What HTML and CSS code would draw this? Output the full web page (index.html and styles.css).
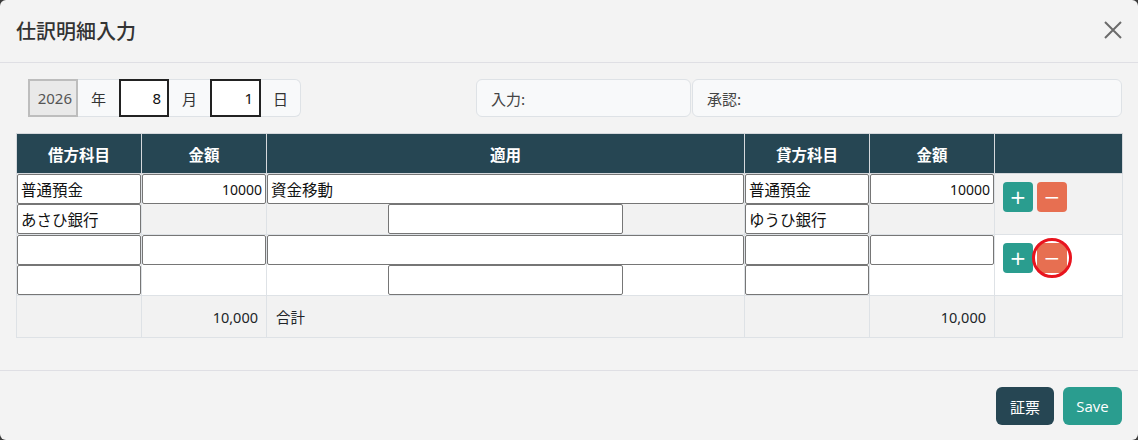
FILE: index.html
```html
<!DOCTYPE html>
<html lang="ja">
<head>
<meta charset="utf-8">
<link rel="stylesheet" href="styles.css">
</head>
<body>
<div class="modal">
  <div class="modal-header">
    <h1 class="title">仕訳明細入力</h1>
    <button class="close" aria-label="close">
      <svg width="18" height="18" viewBox="0 0 18 18"><path d="M1 1L17 17M17 1L1 17" stroke="#6b6b6b" stroke-width="2" fill="none"/></svg>
    </button>
  </div>
  <div class="modal-body">
    <div class="top-row">
      <div class="date-group">
        <input class="d-input year" value="2026" disabled>
        <span class="addon">年</span>
        <input class="d-input focus" value="8">
        <span class="addon">月</span>
        <input class="d-input focus day" value="1">
        <span class="addon last">日</span>
      </div>
      <div class="info info-in">入力:</div>
      <div class="info info-ok">承認:</div>
    </div>
    <table class="grid">
      <colgroup>
        <col class="c1"><col class="c2"><col class="c3"><col class="c4"><col class="c5"><col class="c6">
      </colgroup>
      <thead>
        <tr><th>借方科目</th><th>金額</th><th>適用</th><th>貸方科目</th><th>金額</th><th></th></tr>
      </thead>
      <tbody>
        <tr class="alt">
          <td><input class="f" value="普通預金"><input class="f" value="あさひ銀行"></td>
          <td><input class="f num" value="10000"></td>
          <td><input class="f" value="資金移動"><input class="f mid" value=""></td>
          <td><input class="f" value="普通預金"><input class="f" value="ゆうひ銀行"></td>
          <td><input class="f num" value="10000"></td>
          <td class="act"><div class="btns"><button class="b plus">+</button><button class="b minus">−</button></div></td>
        </tr>
        <tr>
          <td><input class="f" value=""><input class="f" value=""></td>
          <td><input class="f num" value=""></td>
          <td><input class="f" value=""><input class="f mid" value=""></td>
          <td><input class="f" value=""><input class="f" value=""></td>
          <td><input class="f num" value=""></td>
          <td class="act"><div class="btns"><button class="b plus">+</button><span class="wrap"><button class="b minus">−</button><span class="ring"></span></span></div></td>
        </tr>
        <tr class="alt total">
          <td></td>
          <td class="r">10,000</td>
          <td>合計</td>
          <td></td>
          <td class="r">10,000</td>
          <td></td>
        </tr>
      </tbody>
    </table>
  </div>
  <div class="modal-footer">
    <button class="fbtn dark">証票</button>
    <button class="fbtn green">Save</button>
  </div>
</div>
</body>
</html>
```
FILE: styles.css
```css
* { box-sizing: border-box; }
html, body { margin: 0; padding: 0; }
body {
  background: #3a3a3a;
  font-family: "Noto Sans", "Noto Sans CJK JP", sans-serif;
  font-size: 14px;
  color: #212529;
}
.modal {
  width: 1138px;
  height: 440px;
  background: #f3f3f3;
  border-radius: 6px;
  overflow: hidden;
}
.modal-header {
  height: 63px;
  border-bottom: 1px solid #dfdfe4;
  display: flex;
  align-items: center;
  justify-content: space-between;
  padding: 0 16px;
}
.title {
  margin: 0;
  font-family: "Noto Sans CJK JP", sans-serif;
  font-size: 20px;
  font-weight: 500;
  color: #333;
  padding-bottom: 2px;
}
.close {
  border: 0;
  background: transparent;
  padding: 0;
  width: 18px;
  height: 18px;
  margin-bottom: 2px;
}
.close svg { display: block; }
.modal-body {
  padding: 16px 16px 32px 16px;
}
.top-row {
  display: flex;
  height: 38px;
  margin-bottom: 17px;
}
.date-group {
  display: flex;
  margin-left: 12px;
  width: 448px;
}
.d-input {
  flex: none;
  width: 50px;
  height: 38px;
  border: 2px solid #222;
  background: #fff;
  text-align: right;
  padding: 0 6px;
  font-family: "Noto Sans", sans-serif;
  font-size: 15px;
  color: #111;
}
.d-input.day { width: 51px; }
.d-input.year {
  background: #e9e9e9;
  border: 2px solid #bdbdbd;
  color: #555;
  padding-right: 4px;
}
.addon {
  flex: none;
  width: 41px;
  height: 38px;
  display: flex;
  align-items: center;
  justify-content: center;
  background: #f8f9fa;
  border-top: 1px solid #dee2e6;
  border-bottom: 1px solid #dee2e6;
  font-family: "Noto Sans CJK JP", sans-serif;
  font-size: 15px;
  color: #333;
}
.addon.last {
  width: 40px;
  border-right: 1px solid #dee2e6;
  border-radius: 0 6px 6px 0;
}
.info {
  height: 38px;
  background: #f8f9fa;
  border: 1px solid #dee2e6;
  border-radius: 6px;
  display: flex;
  align-items: center;
  padding-left: 14px;
  font-family: "Noto Sans CJK JP", sans-serif;
  font-size: 15px;
  color: #444;
}
.info-in { width: 215px; }
.info-ok { width: 430px; margin-left: 1px; }

.grid {
  width: 1106px;
  border-collapse: collapse;
  table-layout: fixed;
  margin-top: -1px;
}
.c1, .c2, .c4, .c5 { width: 125px; }
.c3 { width: 478px; }
.c6 { width: 128px; }
.grid th {
  background: #264653;
  color: #fff;
  font-family: "Noto Sans CJK JP", sans-serif;
  font-weight: 700;
  font-size: 15.5px;
  height: 40px;
  border: 1px solid #d5d8dc;
  padding: 0;
}
.grid td {
  border: 1px solid #dee2e6;
  padding: 0;
  vertical-align: top;
  background: #fff;
}
.grid tr.alt td { background: #f2f2f2; }
.f {
  display: block;
  width: 100%;
  height: 30px;
  margin: 0;
  border: 1px solid #767676;
  border-radius: 2px;
  background: #fff;
  padding: 0 3px;
  font-family: "Noto Sans CJK JP", sans-serif;
  font-size: 15.5px;
  color: #111;
}
.f.num { text-align: right; padding-right: 3px; font-family: "Noto Sans", sans-serif; font-size: 14px; }
.f.mid { width: 235px; margin: 0 auto; }
.act { padding: 8px !important; }
.btns { display: flex; gap: 4px; }
.b {
  width: 30px;
  height: 30px;
  border: 0;
  border-radius: 4px;
  color: #fff;
  font-size: 20px;
  line-height: 30px;
  padding: 0;
  font-family: "DejaVu Sans", sans-serif;
}
.plus { background: #2a9d8f; }
.minus { background: #e76f51; }
.wrap { position: relative; display: block; width: 30px; height: 30px; }
.ring {
  position: absolute;
  left: -5px;
  top: -5px;
  width: 40px;
  height: 40px;
  border: 3px solid #e8141e;
  border-radius: 50%;
}
.total td {
  height: 42px;
  vertical-align: middle !important;
  padding: 0 9px !important;
  font-family: "Noto Sans", "Noto Sans CJK JP", sans-serif;
  font-size: 14.5px;
}
.total td.r { text-align: right; padding-right: 8px !important; }

.modal-footer {
  border-top: 1px solid #dfdfe4;
  display: flex;
  justify-content: flex-end;
  gap: 9px;
  padding: 16px 16px 0 0;
}
.fbtn {
  height: 38px;
  border: 0;
  border-radius: 6px;
  color: #fff;
  font-size: 15px;
  padding: 0 12px;
  font-family: "Noto Sans CJK JP", sans-serif;
}
.fbtn.dark { background: #264653; width: 58px; }
.fbtn.green { background: #2a9d8f; width: 59px; font-family: "Open Sans", sans-serif; }
```
